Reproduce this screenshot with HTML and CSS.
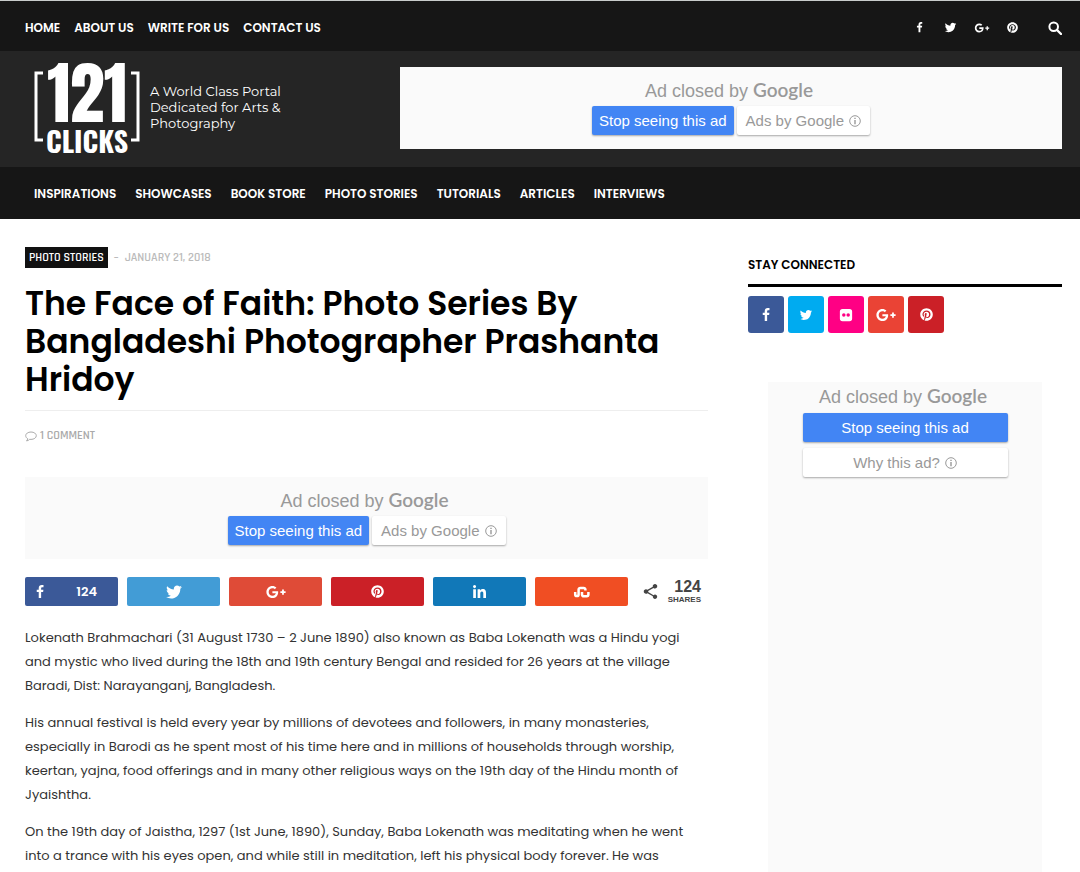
FILE: index.html
```html
<!DOCTYPE html>
<html lang="en">
<head>
<meta charset="utf-8">
<meta name="viewport" content="width=device-width, initial-scale=1">
<title>The Face of Faith - 121 Clicks</title>
<link rel="stylesheet" href="styles.css">
</head>
<body>
<svg class="sprite" aria-hidden="true">
  <symbol id="facebook" viewBox="0 0 1792 1792"><path d="M1343 12v264h-157q-86 0-116 36t-30 108v189h293l-39 296h-254v759h-306v-759h-255v-296h255v-218q0-186 104-288.500t277-102.500q147 0 228 12z"/></symbol>
  <symbol id="twitter" viewBox="0 0 1792 1792"><path d="M1684 408q-67 98-162 167 1 14 1 42 0 130-38 259.500t-115.500 248.500-184.500 210.500-258 146-323 54.500q-271 0-496-145 35 4 78 4 225 0 401-138-105-2-188-64.500t-114-159.500q33 5 61 5 43 0 85-11-112-23-185.500-111.500t-73.500-205.500v-4q68 38 146 41-66-44-105-115t-39-154q0-88 44-163 121 149 294.500 238.500t371.500 99.500q-8-38-8-74 0-134 94.500-228.500t228.500-94.500q140 0 236 102 109-21 205-78-37 115-142 178 93-10 186-50z"/></symbol>
  <symbol id="gplus" viewBox="0 0 640 512"><path d="M386 228.500c1.800 9.700 3.100 19.400 3.100 32C389.200 370.200 315.600 448 204.800 448c-106 0-192-86-192-192s86-192 192-192c51.900 0 95 18.900 128.600 50.300l-52.100 50c-14.200-13.600-39-29.600-76.500-29.600-65.500 0-118.900 54.200-118.900 121.300s53.400 121.300 118.900 121.300c76 0 104.500-54.800 109-82.800h-109v-66H386zm185.500 6.400v-55.700h-56v55.700h-55.800v56h55.800v55.800h56v-55.800h55.700v-56z"/></symbol>
  <symbol id="pinterest" viewBox="0 0 496 512"><path d="M496 256c0 137-111 248-248 248-25.600 0-50.200-3.900-73.400-11.100 10.100-16.500 25.200-43.500 30.800-65 3-11.600 15.400-59 15.400-59 8.100 15.400 31.700 28.500 56.800 28.500 74.800 0 128.700-68.800 128.700-154.300 0-81.900-66.900-143.200-152.900-143.200-107 0-163.900 71.800-163.900 150.100 0 36.400 19.400 81.700 50.300 96.100 4.700 2.200 7.200 1.200 8.300-3.300.8-3.400 5-20.300 6.900-28.100.6-2.500.3-4.700-1.700-7.100-10.100-12.500-18.300-35.300-18.300-56.600 0-54.700 41.400-107.600 112-107.600 60.900 0 103.600 41.500 103.600 100.900 0 67.100-33.900 113.600-78 113.600-24.300 0-42.600-20.100-36.700-44.800 7-29.500 20.500-61.300 20.500-82.600 0-19-10.200-34.900-31.400-34.900-24.900 0-44.900 25.700-44.900 60.200 0 22 7.400 36.800 7.400 36.800s-24.500 103.800-29 123.200c-5 21.400-3 51.600-.9 71.200C65.400 450.900 0 361.100 0 256 0 119 111 8 248 8s248 111 248 248z"/></symbol>
  <symbol id="linkedin" viewBox="0 0 448 448"><path d="M100.300 448H7.400V148.900h92.900zM53.800 108.100C24.100 108.100 0 83.500 0 53.800a53.800 53.800 0 0 1 107.600 0c0 29.700-24.100 54.300-53.800 54.300zM447.900 448h-92.700V302.400c0-34.700-.7-79.200-48.300-79.200-48.300 0-55.700 37.700-55.700 76.700V448h-92.700V148.900h89v40.800h1.300c12.400-23.500 42.700-48.300 87.900-48.300 94 0 111.300 61.900 111.300 142.300V448z"/></symbol>
  <symbol id="stumble" viewBox="0 0 18 14"><path d="M2.200 7v2.400a1.700 1.700 0 0 0 3.400 0V4.600a1.700 1.700 0 0 1 1.700-1.700h3.400a1.700 1.700 0 0 1 1.700 1.700v1M9 7v2.600a1.700 1.700 0 0 0 1.700 1.700h3a1.700 1.700 0 0 0 1.700-1.700V7" fill="none" stroke="currentColor" stroke-width="2.500"/></symbol>
  <symbol id="flickr" viewBox="0 0 16 16"><path fill-rule="evenodd" d="M4 1h8a3 3 0 0 1 3 3v8a3 3 0 0 1-3 3H4a3 3 0 0 1-3-3V4a3 3 0 0 1 3-3zm1.500 5a2 2 0 1 0 0 4 2 2 0 0 0 0-4zm5 0a2 2 0 1 0 0 4 2 2 0 0 0 0-4z"/></symbol>
  <symbol id="share" viewBox="2 2 20 20"><path d="M18 16.080c-.76 0-1.440.3-1.960.77L8.910 12.700c.05-.23.09-.46.09-.7s-.04-.47-.09-.7l7.050-4.110c.54.5 1.250.81 2.040.81 1.660 0 3-1.340 3-3s-1.340-3-3-3-3 1.340-3 3c0 .24.04.47.09.7L8.040 9.810C7.500 9.310 6.790 9 6 9c-1.660 0-3 1.340-3 3s1.340 3 3 3c.79 0 1.500-.31 2.040-.81l7.120 4.160c-.05.21-.08.43-.08.65 0 1.610 1.310 2.920 2.920 2.920s2.920-1.310 2.920-2.920-1.310-2.920-2.920-2.920z"/></symbol>
  <symbol id="search" viewBox="0 0 14 14"><circle cx="5.700" cy="5.700" r="4.300" fill="none" stroke="currentColor" stroke-width="2"/><path d="M9 9l4 4" stroke="currentColor" stroke-width="2.400" stroke-linecap="round"/></symbol>
  <symbol id="comment" viewBox="0 0 12 11"><path d="M6 1C3 1 .7 2.600.7 4.700c0 1.300.8 2.300 2 3-.1 1-.6 1.600-1.200 2.200 1.300-.1 2.400-.7 3.200-1.600.4.100.9.100 1.300.1 3 0 5.300-1.600 5.300-3.700S9 1 6 1z" fill="none" stroke="currentColor"/></symbol>
  <symbol id="info" viewBox="0 0 12 12"><circle cx="6" cy="6" r="5.300" fill="none" stroke="currentColor"/><path d="M5.300 2.700h1.400v1.400H5.300zM5.300 5h1.400v4.300H5.300z"/></symbol>
</svg>

<header>
  <div class="topbar">
    <nav class="topnav" aria-label="Site">
      <a href="#">HOME</a><a href="#">ABOUT US</a><a href="#">WRITE FOR US</a><a href="#">CONTACT US</a>
    </nav>
    <div class="toplinks">
      <a href="#" aria-label="Facebook"><svg class="icon-s"><use href="#facebook"/></svg></a>
      <a href="#" aria-label="Twitter"><svg class="icon-t"><use href="#twitter"/></svg></a>
      <a href="#" aria-label="Google Plus"><svg class="icon-g"><use href="#gplus"/></svg></a>
      <a href="#" aria-label="Pinterest"><svg class="icon-s"><use href="#pinterest"/></svg></a>
      <button class="search" aria-label="Search"><svg class="icon-m"><use href="#search"/></svg></button>
    </div>
  </div>
  <div class="masthead">
    <a class="brand" href="#">
      <svg class="logo" viewBox="0 0 106 92" role="img" aria-label="121 Clicks">
        <path d="M9 11H2v67h7M97 11h7v67h-7" fill="none" stroke="#fff" stroke-width="3"/>
        <text class="logo-num" x="53" y="60" text-anchor="middle">121</text>
        <text class="logo-word" x="53" y="91" text-anchor="middle">CLICKS</text>
      </svg>
      <span class="tagline">A World Class Portal<br>Dedicated for Arts &amp;<br>Photography</span>
    </a>
    <section class="ad ad-top">
      <p class="ad-title">Ad closed by <span class="google">Google</span></p>
      <div class="ad-row"><button class="stop">Stop seeing this ad</button><button class="why">Ads by Google <svg class="icon-i"><use href="#info"/></svg></button></div>
    </section>
  </div>
  <nav class="mainnav" aria-label="Sections">
    <a href="#">INSPIRATIONS</a><a href="#">SHOWCASES</a><a href="#">BOOK STORE</a><a href="#">PHOTO STORIES</a><a href="#">TUTORIALS</a><a href="#">ARTICLES</a><a href="#">INTERVIEWS</a>
  </nav>
</header>

<div class="page">
  <main>
    <div class="meta"><a class="category" href="#">PHOTO STORIES</a><span>–</span><time datetime="2018-01-21">JANUARY 21, 2018</time></div>
    <h1>The Face of Faith: Photo Series By Bangladeshi Photographer Prashanta Hridoy</h1>
    <a class="comments" href="#"><svg class="icon-c"><use href="#comment"/></svg>1 COMMENT</a>
    <section class="ad">
      <p class="ad-title">Ad closed by <span class="google">Google</span></p>
      <div class="ad-row"><button class="stop">Stop seeing this ad</button><button class="why">Ads by Google <svg class="icon-i"><use href="#info"/></svg></button></div>
    </section>
    <div class="shares">
      <a class="share fb counted" href="#" aria-label="Facebook, 124"><svg class="icon-m"><use href="#facebook"/></svg><span>124</span></a>
      <a class="share tw" href="#" aria-label="Twitter"><svg class="icon-l"><use href="#twitter"/></svg></a>
      <a class="share gp" href="#" aria-label="Google Plus"><svg class="icon-gl"><use href="#gplus"/></svg></a>
      <a class="share pin" href="#" aria-label="Pinterest"><svg class="icon-p"><use href="#pinterest"/></svg></a>
      <a class="share in" href="#" aria-label="LinkedIn"><svg class="icon-p"><use href="#linkedin"/></svg></a>
      <a class="share su" href="#" aria-label="StumbleUpon"><svg class="icon-l"><use href="#stumble"/></svg></a>
      <div class="total"><svg class="icon-h"><use href="#share"/></svg><div class="count"><b>124</b><span>SHARES</span></div></div>
    </div>
    <div class="story">
      <p>Lokenath Brahmachari (31 August 1730 – 2 June 1890) also known as Baba Lokenath was a Hindu yogi<br>and mystic who lived during the 18th and 19th century Bengal and resided for 26 years at the village<br>Baradi, Dist: Narayanganj, Bangladesh.</p>
      <p>His annual festival is held every year by millions of devotees and followers, in many monasteries,<br>especially in Barodi as he spent most of his time here and in millions of households through worship,<br>keertan, yajna, food offerings and in many other religious ways on the 19th day of the Hindu month of<br>Jyaishtha.</p>
      <p>On the 19th day of Jaistha, 1297 (1st June, 1890), Sunday, Baba Lokenath was meditating when he went<br>into a trance with his eyes open, and while still in meditation, left his physical body forever. He was</p>
    </div>
  </main>
  <aside>
    <h2>STAY CONNECTED</h2>
    <div class="social">
      <a class="fb" href="#" aria-label="Facebook"><svg class="icon-m"><use href="#facebook"/></svg></a>
      <a class="sky" href="#" aria-label="Twitter"><svg class="icon-m"><use href="#twitter"/></svg></a>
      <a class="pink" href="#" aria-label="Flickr"><svg class="icon-m"><use href="#flickr"/></svg></a>
      <a class="red" href="#" aria-label="Google Plus"><svg class="icon-gl"><use href="#gplus"/></svg></a>
      <a class="pin" href="#" aria-label="Pinterest"><svg class="icon-p"><use href="#pinterest"/></svg></a>
    </div>
    <section class="ad ad-side">
      <p class="ad-title">Ad closed by <span class="google">Google</span></p>
      <div class="ad-column"><button class="stop">Stop seeing this ad</button><button class="why">Why this ad? <svg class="icon-i"><use href="#info"/></svg></button></div>
    </section>
  </aside>
</div>
</body>
</html>
```
FILE: styles.css
```css
* { box-sizing: border-box; }
body { margin: 0; background: #fff; color: #333; font-family: Poppins, Inter, sans-serif; }
a { color: inherit; text-decoration: none; }
p, h1, h2 { margin: 0; }
button { border: 0; font-family: inherit; cursor: pointer; }
svg { flex: none; fill: currentColor; }
.sprite { position: absolute; width: 0; height: 0; }

.icon-s { width: 11px; height: 11px; }
.icon-t { width: 13px; height: 13px; }
.icon-m { width: 14px; height: 14px; }
.icon-p { width: 13px; height: 13px; }
.icon-h { width: 15px; height: 15px; }
.icon-l { width: 18px; height: 18px; }
.icon-g { width: 16px; height: 12px; }
.icon-gl { width: 20px; height: 16px; }
.icon-i { width: 12px; height: 12px; }
.icon-c { width: 12px; height: 11px; }

.topbar { display: flex; justify-content: space-between; align-items: center; height: 51px; padding: 3px 18px 0 25px; border-top: 1px solid #c8cccb; background: #161616; color: #fff; }
.topnav { display: flex; gap: 14px; font-size: 12px; font-weight: 600; }
.toplinks { display: flex; align-items: center; }
.toplinks a { display: flex; justify-content: center; width: 31px; }
.search { display: flex; margin-left: 20px; padding: 0; background: none; color: #fff; }

.masthead { display: flex; align-items: flex-start; height: 116px; padding: 16px 18px 0 34px; background: #252525; color: #fff; }
.brand { display: flex; flex: none; align-items: center; gap: 10px; width: 366px; margin-top: -5px; }
.logo { width: 106px; height: 92px; overflow: visible; }
.logo-num { font: 400 69px Anton, Oswald, "Liberation Sans Narrow", sans-serif; fill: #fff; }
.logo-word { font: 700 28px Oswald, "Liberation Sans Narrow", sans-serif; fill: #fff; }
.tagline { padding-bottom: 2px; font: 400 13px/16px Montserrat, Inter, sans-serif; }
.mainnav { display: flex; align-items: center; gap: 19px; height: 52px; padding: 2px 34px 0; background: #161616; color: #fff; font-size: 12px; font-weight: 600; }

.ad { display: flex; flex-direction: column; align-items: center; height: 82px; padding-top: 13px; background: #fafafa; color: #999; font-family: "Liberation Sans", Arial, sans-serif; }
.ad-top { flex: 1; }
.ad-title { height: 20px; padding-right: 4px; font-size: 18px; line-height: 20px; }
.google { font-family: "Product Sans", Lato, sans-serif; font-size: 19px; font-weight: 600; line-height: 20px; }
.ad-row { display: flex; gap: 3px; margin-top: 6px; }
.ad-column { display: flex; flex-direction: column; gap: 6px; width: 205px; margin-top: 7px; }
.stop, .why { display: flex; align-items: center; justify-content: center; gap: 5px; height: 29px; padding: 0 7px; border-radius: 2px; font-size: 15px; box-shadow: 0 1px 2px #0005; }
.stop { background: #4285f4; color: #fff; }
.why { padding: 0 9px; background: #fff; color: #999; }

.page { display: grid; grid-template-columns: minmax(0, 1fr) 314px; gap: 40px; padding: 28px 18px 0 25px; }
.meta { display: flex; align-items: center; gap: 6px; color: #bbb; font: 600 12px Rajdhani, Roboto, sans-serif; }
.category { padding: 0 4px; background: #111; color: #fff; line-height: 21px; }
h1 { margin-top: 17px; padding-bottom: 11px; border-bottom: 1px solid #eee; color: #000; font-size: 33px; font-weight: 600; line-height: 38px; }
.comments { display: flex; align-items: center; gap: 3px; margin: 17px 0 33px; color: #aaa; font: 600 12px/16px Rajdhani, Roboto, sans-serif; }

.shares { display: grid; grid-template-columns: repeat(6, 1fr) 71px; gap: 9px; height: 29px; margin-top: 18px; }
.share { display: flex; align-items: center; justify-content: center; border-radius: 2px; color: #fff; font-size: 13px; font-weight: 600; }
.counted { justify-content: space-between; padding: 0 21px 0 8px; }
.fb { background: #3b5998; }
.tw { background: #429cd6; }
.gp { background: #df4b37; }
.pin { background: #cb2027; }
.in { background: #1178b8; }
.su { background: #f04e23; }
.sky { background: #00abf0; }
.pink { background: #ff0084; }
.red { background: #ea4335; }
.total { display: flex; align-items: center; justify-content: space-between; padding: 0 7px 0 6px; color: #444; font-family: "Liberation Sans", Arial, sans-serif; }
.count { display: flex; flex-direction: column; align-items: flex-end; font-size: 8px; line-height: 9px; font-weight: 700; }
.count b { font-size: 16px; line-height: 16px; }

.story { margin-top: 20px; font-size: 13px; line-height: 24px; }
.story p { margin-bottom: 13px; }
.story p:last-child { margin-bottom: 0; }

h2 { padding: 9px 0 10px; border-bottom: 3px solid #000; color: #000; font-size: 12px; font-weight: 600; line-height: 18px; }
.social { display: flex; gap: 4px; margin-top: 9px; }
.social a { display: flex; align-items: center; justify-content: center; width: 36px; height: 37px; border-radius: 3px; color: #fff; }
.ad-side { height: auto; min-height: 490px; margin: 49px 20px 0; padding-top: 4px; }
```
